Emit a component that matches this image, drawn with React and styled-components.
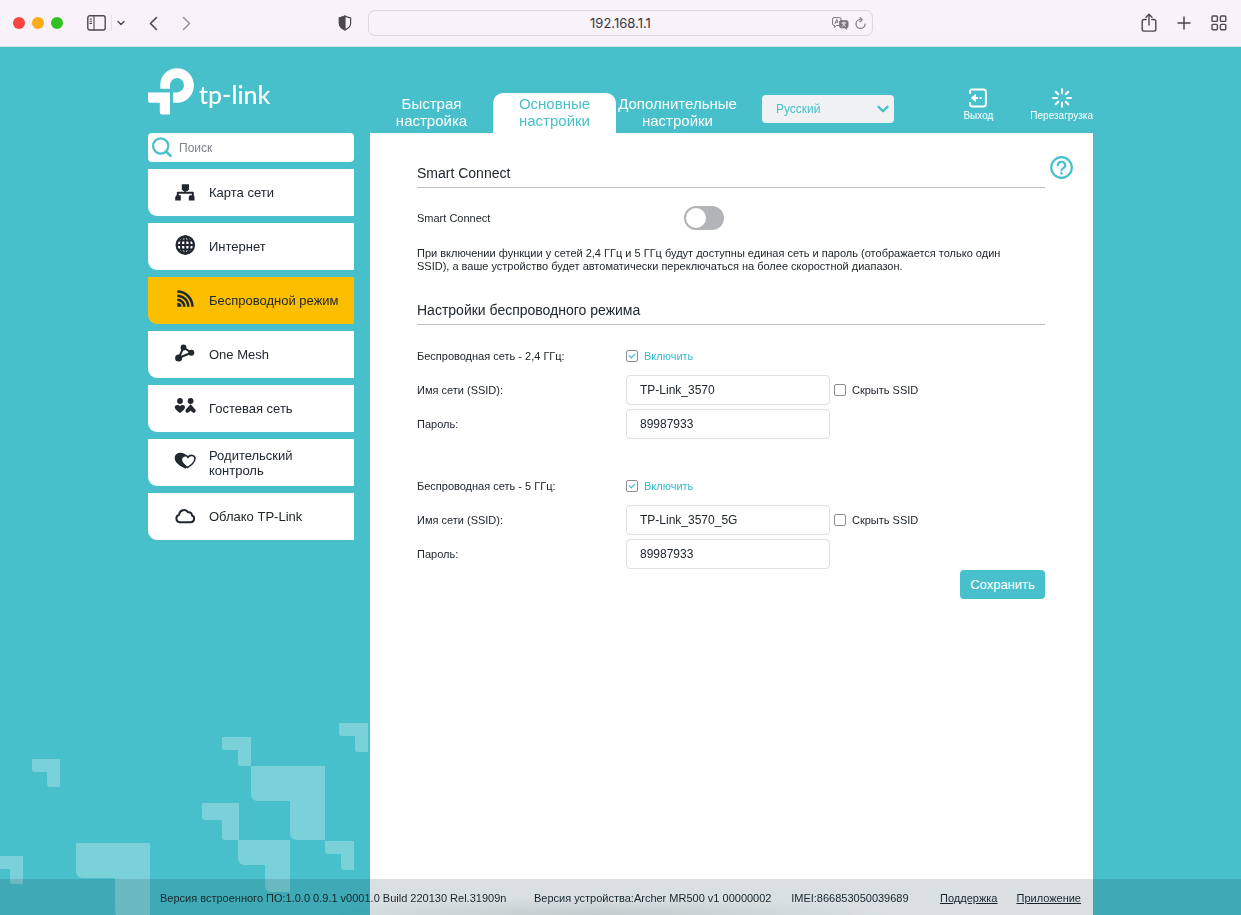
import React, { useState } from 'react';
import styled, { createGlobalStyle } from 'styled-components';

const teal = '#48c0cc';
const ink = '#20272f';
const chromeInk = '#4c4850';

const GlobalStyle = createGlobalStyle`
  *, *::before, *::after { box-sizing: border-box; }
  body {
    margin: 0;
    background: ${teal};
    color: ${ink};
    font-family: "Liberation Sans", Arial, sans-serif;
    font-size: 11px;
  }
  button, input, select { font: inherit; color: inherit; margin: 0; }
  button { border: 0; padding: 0; background: none; cursor: pointer; }
  svg { display: block; flex: none; }
`;

const Page = styled.div`
  display: flex;
  flex-direction: column;
  min-height: 100vh;
`;

/* ---------- Browser toolbar ---------- */

const Toolbar = styled.header`
  display: grid;
  grid-template-columns: 1fr minmax(200px, 505px) 1fr;
  align-items: center;
  height: 47px;
  background: linear-gradient(#f8f3f9, #f8f1f9 90%, #f6f6fb);
  border-bottom: 1px solid #d5dfe6;
  color: ${chromeInk};
  position: relative;
  z-index: 1;
`;

const ToolGroup = styled.div`
  display: flex;
  align-items: center;
  gap: ${p => p.$gap}px;
`;

const LeftTools = styled(ToolGroup)`
  padding: 0 16px 0 13px;
`;

const RightTools = styled(ToolGroup)`
  justify-content: flex-end;
  padding-right: 14px;
`;

const Spacer = styled.div`
  flex: 1;
`;

const Light = styled.span`
  width: 12px;
  height: 12px;
  border-radius: 50%;
  background: ${p => p.$color};
`;

const ToolButton = styled.button`
  display: grid;
  place-items: center;
  color: ${p => (p.$muted ? '#9b969f' : 'inherit')};
`;

const Divider = styled.span`
  width: 1px;
  height: 16px;
  background: #e6e0e8;
`;

const Address = styled.div`
  display: grid;
  grid-template-columns: 1fr auto 1fr;
  align-items: center;
  height: 26px;
  padding: 0 6px;
  border: 1px solid #dcd7de;
  border-radius: 7px;
`;

const AddressInput = styled.input`
  grid-column: 2;
  width: 120px;
  border: 0;
  outline: 0;
  background: none;
  text-align: center;
  font-family: Inter, "Liberation Sans", sans-serif;
  font-size: 13px;
  color: #3a3640;
`;

const AddressTools = styled.div`
  display: flex;
  justify-content: flex-end;
  align-items: center;
  gap: 6px;
  color: #7b767f;
`;

/* ---------- Page frame ---------- */

const Frame = styled.div`
  flex: 1;
  display: grid;
  grid-template-columns: 206px minmax(0, 1fr);
  grid-template-rows: 86px 1fr;
  column-gap: 16px;
  width: 100%;
  max-width: 945px;
  margin: 0 auto;
  position: relative;
`;

const Logo = styled.a`
  display: flex;
  align-items: center;
  gap: 4px;
  height: 47px;
  margin-top: 21px;
  color: #fff;
  text-decoration: none;
`;

const LogoText = styled.span`
  font-family: Lato, sans-serif;
  font-size: 25px;
  font-weight: 500;
  line-height: 30px;
  margin-top: 4px;
`;

const TopBar = styled.div`
  display: flex;
  align-items: flex-end;
`;

const Tabs = styled.nav`
  display: flex;
`;

const Tab = styled.a`
  width: 123px;
  height: 40px;
  padding-top: 2px;
  text-align: center;
  text-decoration: none;
  white-space: nowrap;
  font-size: 15px;
  line-height: 17px;
  color: ${p => (p.$active ? teal : '#fff')};
  background: ${p => (p.$active ? '#fff' : 'transparent')};
  border-radius: 10px 10px 0 0;
`;

const Language = styled.div`
  display: grid;
  align-items: center;
  width: 132px;
  height: 28px;
  margin: 0 0 10px 23px;
  border-radius: 4px;
  background: #f0f1f2;
  color: ${teal};

  & > * { grid-area: 1 / 1; }
  svg { justify-self: end; margin-right: 5px; pointer-events: none; }
`;

const LanguageSelect = styled.select`
  appearance: none;
  width: 100%;
  height: 28px;
  padding: 0 24px 0 14px;
  border: 0;
  background: none;
  font-size: 12px;
`;

const Actions = styled.div`
  flex: 1;
  display: flex;
  justify-content: flex-end;
  gap: 37px;
  padding-bottom: 11px;
`;

const Action = styled.button`
  display: flex;
  flex-direction: column;
  align-items: center;
  gap: 1px;
  font-size: 10px;
  line-height: 13px;
  color: #fff;
`;

/* ---------- Sidebar ---------- */

const Sidebar = styled.aside`
  display: flex;
  flex-direction: column;
  gap: 7px;
`;

const Search = styled.label`
  display: flex;
  align-items: center;
  gap: 7px;
  height: 29px;
  padding-left: 4px;
  border-radius: 4px;
  background: #fff;
  color: ${teal};
`;

const SearchInput = styled.input`
  flex: 1;
  min-width: 0;
  padding: 0;
  border: 0;
  outline: 0;
  background: none;
  font-size: 12px;
  color: ${ink};
  &::placeholder { color: #7f8388; opacity: 1; }
`;

const MenuItem = styled.a`
  display: flex;
  align-items: center;
  gap: 13px;
  height: 47px;
  padding-left: 26px;
  border-radius: 0 0 0 9px;
  background: ${p => (p.$active ? '#fbbf00' : '#fff')};
  color: ${ink};
  font-size: 13px;
  line-height: 15px;
  text-decoration: none;
`;

const MenuText = styled.span`
  max-width: 136px;
`;

/* ---------- Settings panel ---------- */

const Panel = styled.main`
  display: flex;
  align-items: flex-start;
  padding: 26px 0 60px 47px;
  background: #fff;
`;

const Form = styled.form`
  flex: 1;
  min-width: 0;
`;

const HelpColumn = styled.div`
  width: 48px;
  padding-left: 5px;
  margin-top: -3px;
`;

const HelpButton = styled.button`
  color: ${teal};
`;

const Heading = styled.h2`
  margin: 0;
  font-size: 14px;
  font-weight: 400;
  line-height: 28px;
  border-bottom: 1px solid #bdbdbd;
`;

const Row = styled.div`
  display: grid;
  grid-template-columns: 209px 1fr;
  align-items: center;
  min-height: ${p => p.$height || 30}px;
`;

const SmartRow = styled(Row)`
  grid-template-columns: 267px 1fr;
  margin-top: 18px;
`;

const Switch = styled.input`
  appearance: none;
  width: 40px;
  height: 24px;
  padding: 2px;
  border-radius: 12px;
  background: ${p => (p.checked ? teal : '#b3b4b8')};
  cursor: pointer;
  &::before {
    content: '';
    display: block;
    width: 20px;
    height: 20px;
    margin-left: ${p => (p.checked ? 16 : 0)}px;
    border-radius: 50%;
    background: #fff;
  }
`;

const Note = styled.p`
  margin: 17px 0 23px;
  line-height: 13px;
`;

const Network = styled.fieldset`
  display: grid;
  gap: 4px;
  margin: ${p => p.$top}px 0 0;
  padding: 0;
  border: 0;
`;

const Controls = styled.div`
  display: flex;
  align-items: center;
  gap: 4px;
`;

const TextInput = styled.input`
  width: 204px;
  height: 30px;
  padding: 0 13px;
  border: 1px solid #dedfe0;
  border-radius: 4px;
  background: #fff;
  font-size: 12px;
`;

const Check = styled.label`
  display: flex;
  align-items: center;
  gap: 6px;
  color: ${p => (p.$accent ? '#33bccb' : ink)};
`;

const CheckBox = styled.input`
  appearance: none;
  display: grid;
  place-items: center;
  width: 12px;
  height: 12px;
  border: 1px solid #8b8d90;
  border-radius: 2px;
  background: #fff;
  &:checked::before {
    content: '';
    width: 6px;
    height: 4px;
    border-left: 1px solid #2bb8c8;
    border-bottom: 1px solid #2bb8c8;
    transform: translateY(-1px) rotate(-45deg);
  }
`;

const SaveRow = styled.div`
  display: flex;
  justify-content: flex-end;
  margin-top: 1px;
`;

const SaveButton = styled.button`
  width: 85px;
  height: 29px;
  border-radius: 4px;
  background: ${teal};
  color: #fff;
  font-size: 13px;
`;

/* ---------- Background and footer ---------- */

const Pattern = styled.svg`
  position: fixed;
  left: 0;
  bottom: 0;
  fill: #fff;
  fill-opacity: 0.28;
`;

const Footer = styled.footer`
  position: fixed;
  left: 0;
  right: 0;
  bottom: 0;
  height: 36px;
  background:
    radial-gradient(ellipse 290px 18px at 48% 100%, rgba(60, 80, 80, 0.14), transparent),
    rgba(12, 55, 62, 0.153);
`;

const FooterInner = styled.div`
  display: flex;
  align-items: center;
  width: 100%;
  height: 100%;
  max-width: 945px;
  margin: 0 auto;
  padding: 2px 12px 0;
  color: #15252d;
  white-space: nowrap;
`;

const FooterText = styled.span`
  flex: ${p => p.$grow} 0 auto;
`;

const FooterLinks = styled.div`
  display: flex;
  gap: 19px;
`;

const FooterLink = styled.a`
  color: inherit;
  text-decoration: underline;
`;

/* ---------- Icons ---------- */

const line = { fill: 'none', stroke: 'currentColor', strokeLinecap: 'round', strokeLinejoin: 'round' };

const SidebarIcon = () => (
  <svg width="19" height="16" viewBox="0 0 19 16" {...line} strokeWidth="1.4">
    <rect x="0.8" y="0.8" width="17.4" height="14.2" rx="2" />
    <path d="M7 1v14M3 4h1.6M3 6.2h1.6M3 8.4h1.6" strokeWidth="1.1" />
  </svg>
);

const ChevronDown = ({ size = 7, width = 1.4 }) => (
  <svg width={size} height={size} viewBox="0 0 8 8" {...line} strokeWidth={width}>
    <path d="M1 2.5l3 3 3-3" />
  </svg>
);

const Arrow = ({ flip }) => (
  <svg width="9" height="15" viewBox="0 0 9 15" {...line} strokeWidth="1.6">
    <path d={flip ? 'M1.5 1.5l6 6-6 6' : 'M7.5 1.5l-6 6 6 6'} />
  </svg>
);

const Shield = () => (
  <svg width="14" height="16" viewBox="0 0 14 16" {...line} strokeWidth="1.2">
    <path d="M7 1c2 1.3 3.8 1.6 5.6 1.8V8.5c0 2.8-2.2 4.8-5.6 6.4C3.6 13.3 1.4 11.3 1.4 8.500V2.8C3.2 2.6 5 2.3 7 1z" />
    <path d="M7 1v13.9C3.6 13.3 1.4 11.3 1.4 8.5V2.8C3.2 2.6 5 2.3 7 1z" fill="currentColor" />
  </svg>
);

const Translate = () => (
  <svg width="17" height="13" viewBox="0 0 17 13" {...line} strokeWidth="1">
    <path d="M7 8.5H4.5L2.6 10.5V8.5H2a1.4 1.4 0 0 1-1.4-1.4V2A1.4 1.4 0 0 1 2 .6h5.5A1.4 1.4 0 0 1 9 2v1" />
    <path d="M3 6.5l1.8-4 1 2M3.7 5.3h2" />
    <path d="M9 3.7h5.6A1.4 1.4 0 0 1 16 5.100v4.3a1.4 1.4 0 0 1-1.4 1.4v1.5l-1.8-1.5H9a1.4 1.4 0 0 1-1.4-1.4V5.1A1.4 1.4 0 0 1 9 3.7z" fill="currentColor" />
    <path d="M9.8 6h4M11.8 5v1M13 6c-.4 1.6-1.6 2.600-3 3.200M10.6 6c.4 1.600 1.600 2.600 3 3.200" stroke="#f8f2f9" strokeWidth=".8" />
  </svg>
);

const Reload = () => (
  <svg width="11" height="13" viewBox="0 0 11 13" {...line} strokeWidth="1.2">
    <path d="M5 2.5A4.5 4.5 0 1 0 10 7M5 .7l2.2 1.9L5 4.7" />
  </svg>
);

const Share = () => (
  <svg width="16" height="20" viewBox="0 0 16 20" {...line} strokeWidth="1.4">
    <path d="M5.2 6.5H3A1.8 1.8 0 0 0 1.2 8.3v8A1.8 1.8 0 0 0 3 18.1h10a1.8 1.8 0 0 0 1.8-1.8v-8A1.8 1.8 0 0 0 13 6.5h-2.200M8 12V1.500M5 4.300l3-3 3 3" />
  </svg>
);

const Plus = () => (
  <svg width="14" height="14" viewBox="0 0 14 14" {...line} strokeWidth="1.5">
    <path d="M7 1v12M1 7h12" />
  </svg>
);

const Overview = () => (
  <svg width="16" height="16" viewBox="0 0 16 16" {...line} strokeWidth="1.4">
    <rect x="1" y="1" width="5.4" height="5.4" rx="1" />
    <rect x="9.4" y="1" width="5.4" height="5.4" rx="1" />
    <rect x="1" y="9.4" width="5.4" height="5.4" rx="1" />
    <rect x="9.4" y="9.4" width="5.4" height="5.4" rx="1" />
  </svg>
);

const LogoMark = () => (
  <svg width="47" height="47" viewBox="0 0 47 47" fill="currentColor">
    <path d="M12.3 20.8V16.5A16.7 16.2 0 0 1 29 0.3 A16.9 17.2 0 0 1 29 34.7H25V24.4H29A7 7.2 0 1 0 22 17.3V20.8z" />
    <path d="M0 24.4H22V46.6H14.3a2.5 2.5 0 0 1-2.5-2.5V34.7H2.5A2.5 2.5 0 0 1 0 32.2z" />
  </svg>
);

const LogoutIcon = () => (
  <svg width="20" height="20" viewBox="0 0 20 20" {...line} strokeWidth="2" strokeLinecap="butt">
    <path d="M2 6V3.5A1.800 1.800 0 0 1 3.800 1.600H15.500A2.400 2.400 0 0 1 17.900 4v12a2.400 2.400 0 0 1-2.400 2.400H3.800A1.800 1.800 0 0 1 2 16.600V14" />
    <path d="M8 5.800v8.400L2.800 10z" fill="currentColor" stroke="none" />
    <path d="M7 10h3M11.5 10h2.200" strokeWidth="2" />
  </svg>
);

const RebootIcon = () => (
  <svg width="20" height="20" viewBox="0 0 20 20" {...line} strokeWidth="2">
    <path d="M10 1.200v4M10 14.800v4M1 10h4M15 10h4M3.700 3.700l2.600 2.600M13.700 13.700l2.600 2.600M3.700 16.300l2.600-2.600M13.700 6.300l2.600-2.600" />
  </svg>
);

const HelpIcon = () => (
  <svg width="23" height="23" viewBox="0 0 23 23" {...line} strokeWidth="2.2">
    <circle cx="11.5" cy="11.5" r="10.3" />
    <path d="M7.800 9.200a3.700 3.400 0 1 1 5.400 3c-1.200.6-1.700 1.100-1.700 2.300" />
    <path d="M11.500 17.200v.3" strokeWidth="2.400" />
  </svg>
);

const SearchIcon = () => (
  <svg width="20" height="21" viewBox="0 0 20 21" {...line} strokeWidth="2.2">
    <circle cx="8.7" cy="9" r="7.6" />
    <path d="M14.5 14.8l4 4" strokeWidth="2.6" />
  </svg>
);

const MenuSvg = ({ children }) => (
  <svg width="22" height="23" viewBox="0 0 22 23" fill="currentColor">{children}</svg>
);

const icons = {
  map: (
    <MenuSvg>
      <path d="M7.8 3.3h7.200v4.900l-1.500 1.700h-4.200L7.800 8.200z" />
      <path d="M11.3 9v3M3.800 15v-3.200h15V15" fill="none" stroke="currentColor" strokeWidth="2" strokeLinejoin="round" />
      <path d="M2.6 14.200h4.200v5.400H1.200v-3.600zM15.700 14.200h4.200l.6 1.800v3.600h-5.700v-3.600z" />
    </MenuSvg>
  ),
  globe: (
    <MenuSvg>
      <g fill="none" stroke="currentColor" strokeWidth="2">
        <circle cx="11.3" cy="10" r="8.7" strokeWidth="2.2" />
        <ellipse cx="11.3" cy="10" rx="4.4" ry="8.7" />
        <path d="M11.3 1v18M2.5 10h17.6M4 5.400h14.600M4 14.600h14.600" />
      </g>
    </MenuSvg>
  ),
  wifi: (
    <MenuSvg>
      <path d="M3.300 13.800a4.200 4 0 0 1 4.200 4H3.300z" />
      <g fill="none" stroke="currentColor" strokeWidth="2.500">
        <path d="M3.300 10.800a7 7 0 0 1 7 7M3.300 6.700a11 11 0 0 1 11 11M3.300 2.600A15 15 0 0 1 18.400 17.700" />
      </g>
    </MenuSvg>
  ),
  mesh: (
    <MenuSvg>
      <path d="M9.500 4.500L4.600 15 17.300 9.700z" fill="none" stroke="currentColor" strokeWidth="2" />
      <circle cx="9.500" cy="4.500" r="2.900" />
      <circle cx="4.600" cy="15" r="3.500" />
      <circle cx="17.300" cy="9.700" r="3" />
    </MenuSvg>
  ),
  guests: (
    <MenuSvg>
      <circle cx="6" cy="4" r="2.900" />
      <circle cx="16.600" cy="4" r="2.900" />
      <path d="M6 9.300c1.300-2.200 5-1.800 5 .9 0 1.800-2.900 4.200-5 5.800-2.100-1.600-5.200-4-5.200-5.800 0-2.700 3.900-3.100 5.200-.9z" />
      <path d="M16.600 7.200l4.700 5.200c1.500 2.300-1.400 4.400-3.300 2.700l-1.400-1.600-1.500 1.600c-1.900 1.700-4.800-.4-3.300-2.700z" />
    </MenuSvg>
  ),
  hearts: (
    <MenuSvg>
      <path d="M12.500 5C10 .2 .7 .8 .7 7c0 4.900 6 8.500 10.800 10.800l1.500-2z" />
      <path d="M14 6.300c1.900-3.100 7.300-2.300 6.900 1.700-.3 3.400-4.500 6.700-7.600 8.600-2.600-1.900-6-4.800-6-8 0-3.700 4.900-5.300 6.700-2.300z" fill="#fff" stroke="currentColor" strokeWidth="1.600" />
    </MenuSvg>
  ),
  cloud: (
    <MenuSvg>
      <path d="M5.600 17.200a3.800 3.800 0 0 1-.5-7.400C5.400 5.300 11.600 3 14 7.200c2.600-.4 4 1.300 4 3.300 3.200.9 2.800 6.700-1.300 6.700z" fill="none" stroke="currentColor" strokeWidth="2" strokeLinejoin="round" />
    </MenuSvg>
  ),
};

/* An L-shaped corner block of the background pattern: s is its side, t the thickness of its arms. */
const Corner = ({ x, y, s, t }) => {
  const r = s > 50 ? 7 : 3;
  return (
    <path
      d={`M${x} ${y}h${s}v${s}h${r - t}q${-r} 0 ${-r} ${-r}v${t - s + r}h${t + r - s}q${-r} 0 ${-r} ${-r}z`}
    />
  );
};

const corners = [
  { x: 32, y: 59, s: 28, t: 13 },
  { x: 222, y: 37, s: 29, t: 13 },
  { x: 251, y: 66, s: 74, t: 35 },
  { x: 202, y: 103, s: 37, t: 17 },
  { x: 238, y: 140, s: 52, t: 25 },
  { x: 325, y: 141, s: 29, t: 13 },
  { x: 339, y: 23, s: 29, t: 13 },
  { x: -5, y: 156, s: 28, t: 13 },
  { x: 76, y: 143, s: 74, t: 35 },
];

const menu = [
  { icon: 'map', text: 'Карта сети' },
  { icon: 'globe', text: 'Интернет' },
  { icon: 'wifi', text: 'Беспроводной режим', active: true },
  { icon: 'mesh', text: 'One Mesh' },
  { icon: 'guests', text: 'Гостевая сеть' },
  { icon: 'hearts', text: 'Родительский контроль' },
  { icon: 'cloud', text: 'Облако TP-Link' },
];

const tabs = [
  { lines: ['Быстрая', 'настройка'] },
  { lines: ['Основные', 'настройки'], active: true },
  { lines: ['Дополнительные', 'настройки'] },
];

const networks = [
  { id: 'n24', title: 'Беспроводная сеть - 2,4 ГГц:', ssid: 'TP-Link_3570', password: '89987933', top: 16 },
  { id: 'n5', title: 'Беспроводная сеть - 5 ГГц:', ssid: 'TP-Link_3570_5G', password: '89987933', top: 32 },
];

const NetworkFields = ({ id, title, ssid, password, top }) => (
  <Network $top={top}>
    <Row>
      <label htmlFor={`${id}-on`}>{title}</label>
      <Check $accent>
        <CheckBox id={`${id}-on`} type="checkbox" defaultChecked />
        Включить
      </Check>
    </Row>
    <Row>
      <label htmlFor={`${id}-ssid`}>Имя сети (SSID):</label>
      <Controls>
        <TextInput id={`${id}-ssid`} type="text" defaultValue={ssid} />
        <Check>
          <CheckBox type="checkbox" />
          Скрыть SSID
        </Check>
      </Controls>
    </Row>
    <Row>
      <label htmlFor={`${id}-pass`}>Пароль:</label>
      <TextInput id={`${id}-pass`} type="text" defaultValue={password} />
    </Row>
  </Network>
);

export default function App() {
  const [smart, setSmart] = useState(false);

  return (
    <Page>
      <GlobalStyle />
      <Toolbar>
        <LeftTools $gap={24}>
          <ToolGroup $gap={7}>
            <Light $color="#f9453f" />
            <Light $color="#fbab17" />
            <Light $color="#2fc222" />
          </ToolGroup>
          <ToolGroup $gap={5}>
            <ToolButton aria-label="Боковое меню"><SidebarIcon /></ToolButton>
            <Divider />
            <ToolButton aria-label="Группы вкладок"><ChevronDown size={8} /></ToolButton>
          </ToolGroup>
          <ToolGroup $gap={24}>
            <ToolButton aria-label="Назад"><Arrow /></ToolButton>
            <ToolButton aria-label="Вперёд" $muted><Arrow flip /></ToolButton>
          </ToolGroup>
          <Spacer />
          <ToolButton aria-label="Конфиденциальность"><Shield /></ToolButton>
        </LeftTools>
        <Address>
          <AddressInput aria-label="Адрес" defaultValue="192.168.1.1" />
          <AddressTools>
            <ToolButton aria-label="Перевести"><Translate /></ToolButton>
            <ToolButton aria-label="Обновить"><Reload /></ToolButton>
          </AddressTools>
        </Address>
        <RightTools $gap={20}>
          <ToolButton aria-label="Поделиться"><Share /></ToolButton>
          <ToolButton aria-label="Новая вкладка"><Plus /></ToolButton>
          <ToolButton aria-label="Обзор вкладок"><Overview /></ToolButton>
        </RightTools>
      </Toolbar>

      <Pattern width="370" height="215" viewBox="0 0 370 215" aria-hidden="true">
        {corners.map(c => <Corner key={`${c.x}-${c.y}`} {...c} />)}
      </Pattern>

      <Frame>
        <Logo href="#home">
          <LogoMark />
          <LogoText>tp-link</LogoText>
        </Logo>
        <TopBar>
          <Tabs>
            {tabs.map(t => (
              <Tab key={t.lines[0]} href="#tab" $active={t.active}>
                {t.lines[0]}<br />{t.lines[1]}
              </Tab>
            ))}
          </Tabs>
          <Language>
            <LanguageSelect aria-label="Язык" defaultValue="ru">
              <option value="ru">Русский</option>
            </LanguageSelect>
            <ChevronDown size={12} width={1.6} />
          </Language>
          <Actions>
            <Action><LogoutIcon />Выход</Action>
            <Action><RebootIcon />Перезагрузка</Action>
          </Actions>
        </TopBar>

        <Sidebar>
          <Search>
            <SearchIcon />
            <SearchInput type="text" placeholder="Поиск" aria-label="Поиск" />
          </Search>
          {menu.map(m => (
            <MenuItem key={m.text} href="#menu" $active={m.active}>
              {icons[m.icon]}
              <MenuText>{m.text}</MenuText>
            </MenuItem>
          ))}
        </Sidebar>

        <Panel>
          <Form onSubmit={e => e.preventDefault()}>
            <Heading>Smart Connect</Heading>
            <SmartRow $height={24}>
              <label htmlFor="smart">Smart Connect</label>
              <Switch id="smart" type="checkbox" checked={smart} onChange={e => setSmart(e.target.checked)} />
            </SmartRow>
            <Note>
              При включении функции у сетей 2,4 ГГц и 5 ГГц будут доступны единая сеть и пароль (отображается только один
              <br />
              SSID), а ваше устройство будет автоматически переключаться на более скоростной диапазон.
            </Note>
            <Heading>Настройки беспроводного режима</Heading>
            {networks.map(n => <NetworkFields key={n.id} {...n} />)}
            <SaveRow>
              <SaveButton type="submit">Сохранить</SaveButton>
            </SaveRow>
          </Form>
          <HelpColumn>
            <HelpButton aria-label="Справка"><HelpIcon /></HelpButton>
          </HelpColumn>
        </Panel>
      </Frame>

      <Footer>
        <FooterInner>
          <FooterText $grow={7}>Версия встроенного ПО:1.0.0 0.9.1 v0001.0 Build 220130 Rel.31909n</FooterText>
          <FooterText $grow={5}>Версия устройства:Archer MR500 v1 00000002</FooterText>
          <FooterText $grow={8}>IMEI:866853050039689</FooterText>
          <FooterLinks>
            <FooterLink href="#support">Поддержка</FooterLink>
            <FooterLink href="#app">Приложение</FooterLink>
          </FooterLinks>
        </FooterInner>
      </Footer>
    </Page>
  );
}
